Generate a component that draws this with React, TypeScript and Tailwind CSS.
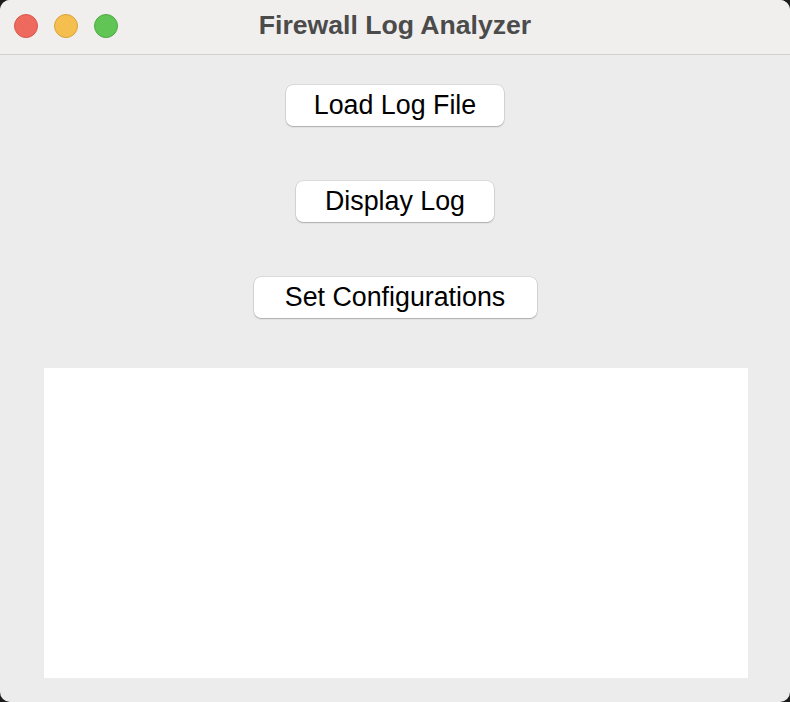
import React from "react";

const buttons = [
  { label: "Load Log File", width: "w-[218px]" },
  { label: "Display Log", width: "w-[198px]" },
  { label: "Set Configurations", width: "w-[283px]" },
];

const App: React.FC = () => {
  return (
    <div className="w-[790px] h-[702px] bg-[#1c1c1c]">
      <div
        className="w-full h-full rounded-[10px] overflow-hidden flex flex-col bg-[#ececec]"
        style={{ fontFamily: '"Liberation Sans", Arial, sans-serif' }}
      >
        {/* title bar */}
        <div className="relative h-[55px] shrink-0 bg-[#f0efee] border-b border-[#d2d1d0] flex items-center justify-center">
          <div className="absolute left-[14px] top-[14px] flex gap-[16px]">
            <span className="w-[24px] h-[24px] rounded-full bg-[#ee6a5f] border border-[#d9564b]" />
            <span className="w-[24px] h-[24px] rounded-full bg-[#f5bf4f] border border-[#d9a23a]" />
            <span className="w-[24px] h-[24px] rounded-full bg-[#61c555] border border-[#4ea845]" />
          </div>
          <span className="text-[26.6px] font-bold text-[#4b4b4b] leading-none -mt-[4px]">
            Firewall Log Analyzer
          </span>
        </div>

        {/* content */}
        <div className="flex-1 flex flex-col items-center pt-[30px] px-[44px] pb-[24px]">
          <div className="flex flex-col items-center gap-[55px]">
            {buttons.map((b) => (
              <button
                key={b.label}
                className={`${b.width} h-[41px] bg-white rounded-[7px] flex items-center justify-center text-[26.8px] text-black leading-none shadow-[0_0_0_0.5px_rgba(0,0,0,0.14),0_1px_1.5px_rgba(0,0,0,0.22)]`}
              >
                {b.label}
              </button>
            ))}
          </div>
          <div className="mt-[50px] self-start w-[704px] flex-1 bg-white" />
        </div>
      </div>
    </div>
  );
};

export default App;
